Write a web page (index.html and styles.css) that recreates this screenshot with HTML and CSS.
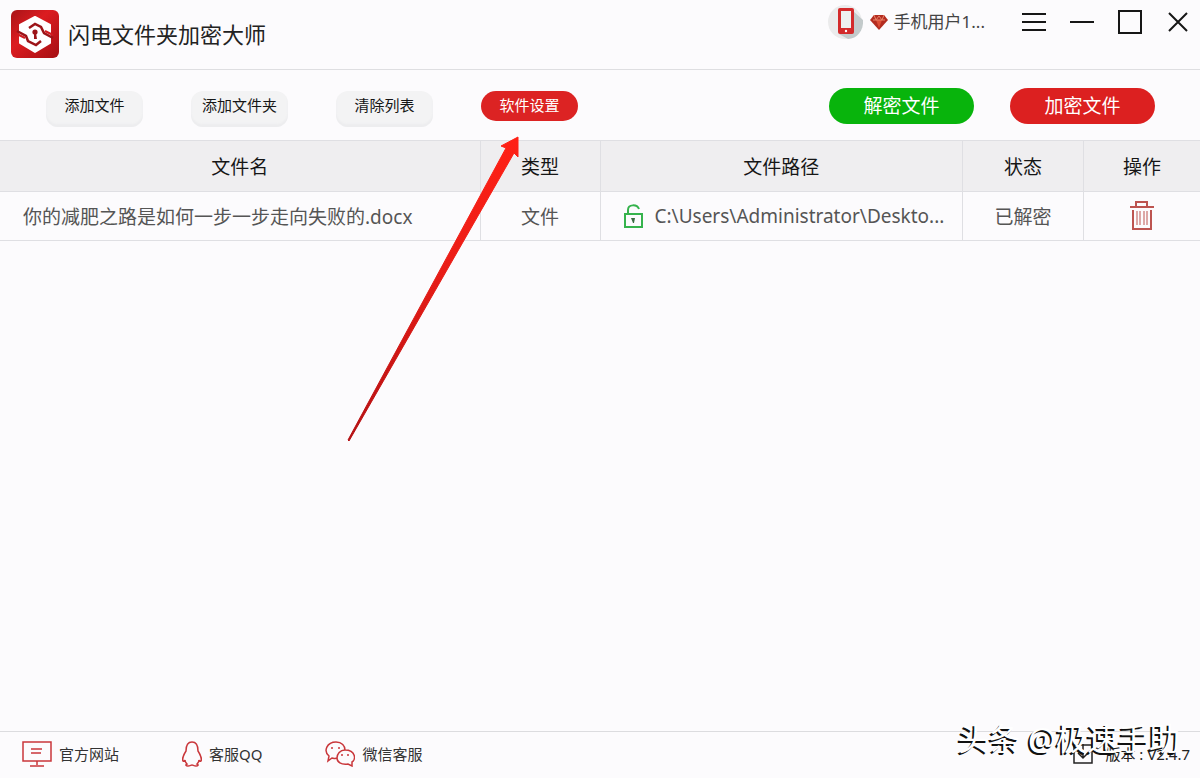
FILE: index.html
```html
<!DOCTYPE html>
<html lang="zh-CN">
<head>
<meta charset="utf-8">
<meta name="viewport" content="width=device-width, initial-scale=1">
<title>闪电文件夹加密大师</title>
<link rel="stylesheet" href="styles.css">
</head>
<body>
<div class="app">
  <header class="titlebar">
    <div class="brand">
      <svg class="brand-logo" viewBox="0 0 48 48" aria-hidden="true">
        <defs>
          <linearGradient id="logoFill" x1="0" y1="0" x2="1" y2="1">
            <stop offset="0" stop-color="#a81418"/>
            <stop offset="0.4" stop-color="#dc1c20"/>
            <stop offset="1" stop-color="#a50f13"/>
          </linearGradient>
        </defs>
        <rect width="48" height="48" rx="6" fill="url(#logoFill)"/>
        <path d="M24 7 39 15v18L24 42 9 33V15z" fill="#fff" stroke="#fff" stroke-width="2" stroke-linejoin="round"/>
        <path d="M6 21l9 5 2 5 8 4 5-4M42 28l-9-5-3-6-6-3-6 4" fill="none" stroke="#9c1418" stroke-width="2.5"/>
        <path d="M6 24l8 4M42 25l-8-4" stroke="#d01c20" stroke-width="2"/>
        <circle cx="24" cy="22" r="2.6" fill="#9c1418"/>
        <path d="M23 23h2l1 6h-3z" fill="#9c1418"/>
      </svg>
      <h1 class="brand-name">闪电文件夹加密大师</h1>
    </div>
    <div class="account">
      <svg class="avatar" viewBox="0 0 36 36" aria-hidden="true">
        <circle cx="17" cy="18" r="17" fill="#ebebec"/>
        <path d="M25 7l10 9c1 10-6 19-15 19l-9-5z" fill="#c3cacb"/>
        <rect x="10" y="4" width="16" height="26" rx="2" fill="#d32a2b"/>
        <path d="M13 7h10v17H13z" fill="#eef0f0"/>
        <circle cx="18" cy="27" r="1.2" fill="#fff"/>
      </svg>
      <svg class="gem" viewBox="0 0 18 16" aria-hidden="true">
        <path d="M4 1h10l4 5-9 10L0 6z" fill="#b32c20"/>
        <path d="M6 6h6l-3 8z" fill="#dd4d35"/>
        <path d="M4 1l2 5 3-4 3 4 2-5M3 6h12" fill="none" stroke="#e98369"/>
      </svg>
      <span class="account-name">手机用户1...</span>
    </div>
    <div class="window-controls">
      <button class="window-button" type="button" aria-label="菜单"><svg viewBox="0 0 24 24"><path d="M0 4h24M0 12h24M0 20h24"/></svg></button>
      <button class="window-button" type="button" aria-label="最小化"><svg viewBox="0 0 24 24"><path d="M0 12h24"/></svg></button>
      <button class="window-button" type="button" aria-label="最大化"><svg viewBox="0 0 24 24"><path d="M1 1h22v22H1z"/></svg></button>
      <button class="window-button" type="button" aria-label="关闭"><svg viewBox="0 0 24 24"><path d="M3 3l18 18M21 3 3 21"/></svg></button>
    </div>
  </header>

  <div class="toolbar">
    <div class="toolbar-tools">
      <button class="tool" type="button">添加文件</button>
      <button class="tool" type="button">添加文件夹</button>
      <button class="tool" type="button">清除列表</button>
      <button class="tool tool-active" type="button">软件设置</button>
    </div>
    <div class="toolbar-actions">
      <button class="action action-decrypt" type="button">解密文件</button>
      <button class="action action-encrypt" type="button">加密文件</button>
    </div>
  </div>

  <main class="content">
    <table class="files">
      <colgroup>
        <col class="col-name"><col class="col-type"><col class="col-path"><col class="col-state"><col class="col-ops">
      </colgroup>
      <thead>
        <tr><th>文件名</th><th>类型</th><th>文件路径</th><th>状态</th><th>操作</th></tr>
      </thead>
      <tbody>
        <tr>
          <td class="cell-name">你的减肥之路是如何一步一步走向失败的.docx</td>
          <td>文件</td>
          <td>
            <div class="path">
              <svg class="lock" viewBox="0 0 20 24" aria-hidden="true">
                <path d="M1 10h17v13H1zM4 10V6c0-6 9-6 11-1"/>
                <path d="M7 14h4l-1 5H9z" fill="#3d6b43"/>
              </svg>
              <span>C:\Users\Administrator\Deskto...</span>
            </div>
          </td>
          <td>已解密</td>
          <td>
            <button class="delete" type="button" aria-label="删除">
              <svg viewBox="0 0 24 30"><path d="M0 6h24M6 6V1h11v5M3 9v19h18V9"/><path class="delete-ribs" d="M7 10v14M10 10v14M14 10v14M17 10v14"/></svg>
            </button>
          </td>
        </tr>
      </tbody>
    </table>
  </main>

  <footer class="footer">
    <nav class="links">
      <a class="link" href="#">
        <svg class="icon-site" viewBox="0 0 30 26" aria-hidden="true"><path d="M1 1h28v19H1zM15 20v4M8 25h14M9 8h11M9 12h10"/></svg>
        <span>官方网站</span>
      </a>
      <a class="link" href="#">
        <svg class="icon-qq" viewBox="0 0 20 26" aria-hidden="true"><path d="M10 1C5 1 4 6 4 10c-2 3-4 8-3 10 1 1 2-1 2-1 0 2 1 3 2 4-2 1-1 2 1 2s3-1 4-1 2 1 4 1 3-1 1-2c1-1 2-2 2-4 0 0 1 2 2 1 1-2-1-7-3-10 0-4-1-9-6-9z"/></svg>
        <span>客服QQ</span>
      </a>
      <a class="link" href="#">
        <svg class="icon-wechat" viewBox="0 0 30 26" aria-hidden="true">
          <path d="M12 17c-2 1-4 0-5 0l-4 3 1-5C-2 10 2 1 11 1c6 0 9 4 9 8M20 9c11 0 11 10 7 12v4l-4-2c-7 1-11-2-11-6s3-8 8-8z"/>
          <path d="M7 6v2M14 6v2M17 13v2M23 13v2"/>
        </svg>
        <span>微信客服</span>
      </a>
    </nav>
    <div class="version">
      <svg class="icon-update" viewBox="0 0 20 20" aria-hidden="true"><path d="M1 1h18v18H1zM10 0v14M5 9l5 5 5-5"/></svg>
      <span>版本 : V2.4.7</span>
    </div>
    <div class="watermark">头条 @极速手助</div>
  </footer>

  <svg class="pointer" viewBox="0 0 174 308" aria-hidden="true">
    <defs>
      <linearGradient id="pointerFill" x1="0" y1="1" x2="0" y2="0">
        <stop offset="0" stop-color="#b30f12"/>
        <stop offset="0.6" stop-color="#ec1e17"/>
        <stop offset="1" stop-color="#ff2015"/>
      </linearGradient>
    </defs>
    <path d="M171 2 154 11l5 2L1 305l1 1L167 18l4 4z" fill="url(#pointerFill)" stroke="url(#pointerFill)" stroke-linejoin="round"/>
  </svg>
</div>
</body>
</html>
```
FILE: styles.css
```css
* {
  box-sizing: border-box;
}

body {
  margin: 0;
  background: #fcfbfd;
  color: #222;
  font-family: "Noto Sans", "Noto Sans CJK SC", sans-serif;
}

button {
  border: 0;
  padding: 0;
  background: none;
  color: inherit;
  font-family: inherit;
  cursor: pointer;
}

svg {
  display: block;
  flex: none;
}

.app {
  position: relative;
  display: flex;
  flex-direction: column;
  min-height: 100vh;
}

.titlebar {
  display: flex;
  align-items: flex-start;
  min-height: 70px;
  padding: 4px 10px 0 11px;
  border-bottom: 1px solid #dedee1;
}

.brand {
  display: flex;
  align-items: center;
  gap: 9px;
  margin: 6px auto 0 0;
}

.brand-logo {
  width: 48px;
  height: 48px;
}

.brand-name {
  margin: 0;
  font-size: 22px;
  font-weight: 400;
  line-height: 32px;
}

.account {
  display: flex;
  align-items: center;
  gap: 6px;
  margin-right: 37px;
  color: #444;
  font-size: 17px;
  line-height: 36px;
}

.avatar {
  width: 36px;
  height: 36px;
}

.gem {
  width: 18px;
  height: 16px;
}

.window-controls {
  display: flex;
  gap: 24px;
  padding-top: 6px;
}

.window-button {
  width: 24px;
  height: 24px;
}

.window-button path {
  fill: none;
  stroke: #161616;
  stroke-width: 2;
}

.toolbar {
  display: flex;
  justify-content: space-between;
  align-items: flex-start;
  min-height: 70px;
  padding: 18px 45px 0 46px;
}

.toolbar-tools {
  display: flex;
  align-items: flex-start;
  gap: 48px;
  padding-top: 3px;
}

.tool {
  width: 97px;
  height: 36px;
  padding-bottom: 8px;
  border-radius: 12px;
  background: #f3f3f4;
  box-shadow: inset 0 -3px 2px #ededef;
  color: #161616;
  font-size: 15px;
  line-height: 28px;
  white-space: nowrap;
}

.tool-active {
  height: 30px;
  padding: 0 0 2px;
  border-radius: 15px;
  background: #dc2323;
  box-shadow: none;
  color: #fff;
}

.toolbar-actions {
  display: flex;
  gap: 36px;
}

.action {
  width: 145px;
  height: 36px;
  border-radius: 18px;
  color: #fff;
  font-size: 19px;
  line-height: 36px;
}

.action-decrypt {
  background: #08b40c;
}

.action-encrypt {
  background: #dc2020;
}

.content {
  flex: 1;
}

.files {
  width: 100%;
  border-collapse: collapse;
  table-layout: fixed;
  color: #555;
  font-size: 19px;
  text-align: center;
}

.col-name { width: 40%; }
.col-type { width: 10%; }
.col-path { width: 30.2%; }
.col-state { width: 10.1%; }
.col-ops { width: 9.7%; }

.files th,
.files td {
  padding: 0;
  border: 1px solid #dfdfe3;
  font-weight: 400;
}

.files th:first-child,
.files td:first-child {
  border-left: 0;
}

.files th:last-child,
.files td:last-child {
  border-right: 0;
}

.files th {
  height: 51px;
  background: #efeef0;
  color: #161616;
}

.files td {
  height: 49px;
  white-space: nowrap;
}

.files .cell-name {
  padding-left: 23px;
  text-align: left;
}

.path {
  display: flex;
  align-items: center;
  gap: 11px;
  padding-left: 23px;
}

.lock {
  width: 20px;
  height: 24px;
  fill: none;
  stroke: #36b34d;
  stroke-width: 2;
}

.lock path + path {
  stroke: none;
}

.delete {
  display: block;
  margin: 0 auto;
}

.delete svg {
  width: 24px;
  height: 30px;
  fill: none;
  stroke: #bd5450;
  stroke-width: 2;
}

.delete .delete-ribs {
  stroke-width: 1;
}

.footer {
  position: relative;
  display: flex;
  justify-content: space-between;
  align-items: center;
  min-height: 47px;
  padding: 0 10px 2px 22px;
  border-top: 1px solid #dcdcdf;
  font-size: 15px;
  line-height: 26px;
}

.links,
.link,
.version {
  display: flex;
  align-items: center;
}

.links {
  gap: 63px;
}

.link {
  gap: 7px;
  color: #333;
  text-decoration: none;
}

.link svg {
  fill: none;
  stroke: #c9373b;
  stroke-width: 1.5;
}

.icon-site,
.icon-wechat {
  width: 30px;
  height: 26px;
}

.icon-qq {
  width: 20px;
  height: 26px;
}

.version {
  gap: 12px;
}

.icon-update {
  width: 20px;
  height: 20px;
  fill: none;
  stroke: #222;
  stroke-width: 1.5;
}

.watermark {
  position: absolute;
  right: 20px;
  bottom: 17px;
  color: #fff;
  font-size: 31px;
  line-height: 46px;
  white-space: nowrap;
  text-shadow: -2px 2px 0 #111;
}

.pointer {
  position: absolute;
  top: 135px;
  left: 347px;
  width: 174px;
  height: 308px;
  pointer-events: none;
}
```
